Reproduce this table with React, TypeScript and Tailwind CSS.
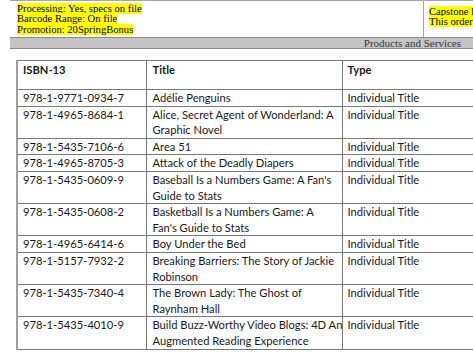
const rows: [string, string[], string][] = [
  ['978-1-9771-0934-7', ['Adélie Penguins'], 'Individual Title'],
  ['978-1-4965-8684-1', ['Alice, Secret Agent of Wonderland: A', 'Graphic Novel'], 'Individual Title'],
  ['978-1-5435-7106-6', ['Area 51'], 'Individual Title'],
  ['978-1-4965-8705-3', ['Attack of the Deadly Diapers'], 'Individual Title'],
  ['978-1-5435-0609-9', ['Baseball Is a Numbers Game: A Fan\'s', 'Guide to Stats'], 'Individual Title'],
  ['978-1-5435-0608-2', ['Basketball Is a Numbers Game: A', 'Fan\'s Guide to Stats'], 'Individual Title'],
  ['978-1-4965-6414-6', ['Boy Under the Bed'], 'Individual Title'],
  ['978-1-5157-7932-2', ['Breaking Barriers: The Story of Jackie', 'Robinson'], 'Individual Title'],
  ['978-1-5435-7340-4', ['The Brown Lady: The Ghost of', 'Raynham Hall'], 'Individual Title'],
  ['978-1-5435-4010-9', ['Build Buzz-Worthy Video Blogs: 4D An', 'Augmented Reading Experience'], 'Individual Title'],
];

const serif = "font-['Liberation_Serif',serif]";
const body = "font-['Lato',sans-serif] text-[11.2px] leading-[15.6px] text-[#1a1a1a]";

export default function App() {
  return (
    <div className="w-[473px] h-[353px] overflow-hidden bg-white">
      {/* order info header */}
      <div className={`ml-[10px] flex h-[37px] border-t border-[#a6a6a6] ${serif} text-[10.6px] leading-[10.4px] text-black`}>
        <div className="w-[414px] shrink-0 pl-[7px] pt-[3px] border-r border-[#a6a6a6]">
          <div><span className="bg-[#ffff00]">Processing: Yes, specs on file</span></div>
          <div><span className="bg-[#ffff00]">Barcode Range: On file</span></div>
          <div><span className="bg-[#ffff00]">Promotion: 20SpringBonus</span></div>
        </div>
        <div className="min-w-0 flex-1 overflow-hidden pl-[5px] pt-[6px] whitespace-nowrap">
          <div><span className="bg-[#ffff00]">Capstone Press</span></div>
          <div><span className="bg-[#ffff00]">This order qualifies</span></div>
        </div>
      </div>

      <div className={`ml-[10px] h-[12px] bg-[#c4c4c4] border-y border-[#8a8a8a] flex items-center justify-end pr-[12px] ${serif} text-[11px] text-[#3a3a3a]`}>
        Products and Services
      </div>

      {/* products table */}
      <table className={`mt-[11px] ml-[16px] border-collapse w-[600px] table-fixed ${body}`}>
        <colgroup>
          <col className="w-[129px]" />
          <col className="w-[196px]" />
          <col />
        </colgroup>
        <thead>
          <tr className="h-[29px] align-top">
            <th className="border border-[#7a7a7a] border-l-2 border-l-[#a0a0a0] text-left font-bold pl-[5px] pt-[1px]">ISBN-13</th>
            <th className="border border-[#7a7a7a] text-left font-bold pl-[6px] pt-[1px]">Title</th>
            <th className="border border-[#7a7a7a] text-left font-bold pl-[5px] pt-[1px]">Type</th>
          </tr>
        </thead>
        <tbody>
          {rows.map(([isbn, title, type]) => (
            <tr key={isbn} className="align-top">
              <td className="border border-[#7a7a7a] border-l-2 border-l-[#a0a0a0] pl-[5px] whitespace-nowrap">{isbn}</td>
              <td className="border border-[#7a7a7a] pl-[6px] whitespace-nowrap">
                {title.map((t) => (
                  <div key={t}>{t}</div>
                ))}
              </td>
              <td className="border border-[#7a7a7a] pl-[5px] whitespace-nowrap">{type}</td>
            </tr>
          ))}
        </tbody>
      </table>
    </div>
  );
}
